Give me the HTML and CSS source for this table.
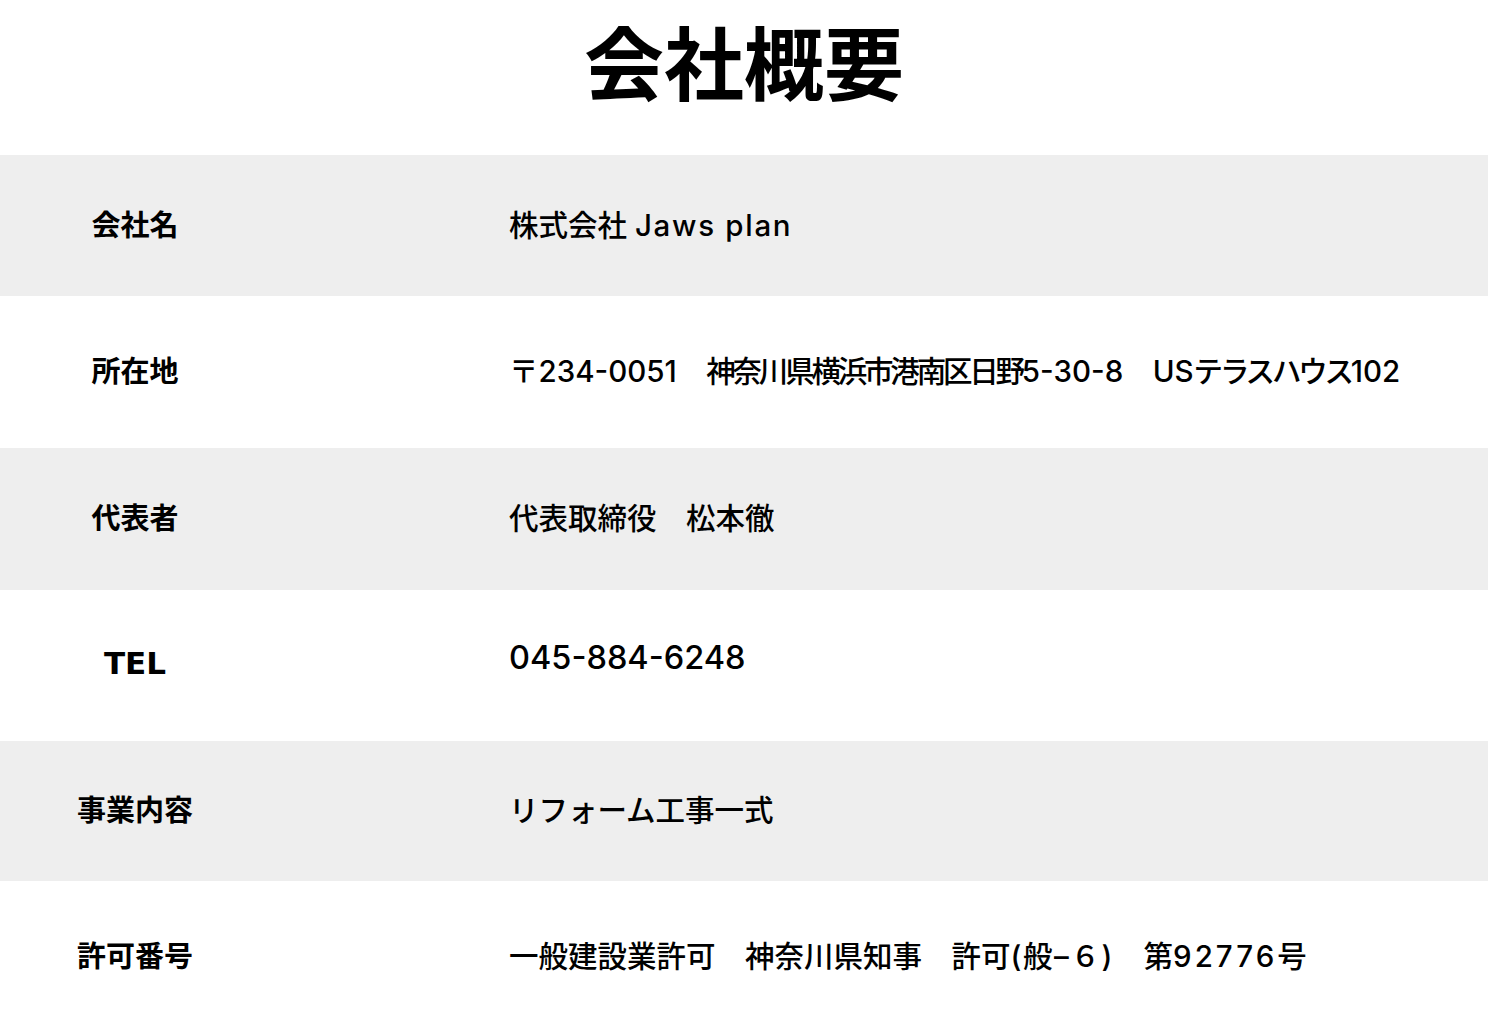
FILE: index.html
```html
<!DOCTYPE html>
<html lang="ja">
<head>
<meta charset="utf-8">
<link rel="stylesheet" href="styles.css">
</head>
<body>
<h1 class="title">会社概要</h1>
<div class="table">
  <div class="row gray h141"><div class="label">会社名</div><div class="value">株式会社 <span class="wide">Jaws plan</span></div></div>
  <div class="row h152"><div class="label">所在地</div><div class="value">〒234-0051　<span class="tight">神奈川県横浜市港南区日野</span>5-30-8　US<span class="tight">テラスハウス</span>102</div></div>
  <div class="row gray h142"><div class="label">代表者</div><div class="value">代表取締役　松本徹</div></div>
  <div class="row h151"><div class="label latin">TEL</div><div class="value tel">045-884-6248</div></div>
  <div class="row gray h140"><div class="label">事業内容</div><div class="value">リフォーム工事一式</div></div>
  <div class="row h152"><div class="label">許可番号</div><div class="value">一般建設業許可　神奈川県知事　許可<span class="paren">(般–６)</span>　第<span class="num">92776</span>号</div></div>
</div>
</body>
</html>
```
FILE: styles.css
```css
html, body {
  margin: 0;
  padding: 0;
  background: #ffffff;
  color: #000000;
  font-family: "Inter", "Noto Sans CJK JP", sans-serif;
}
.title {
  margin: 0;
  height: 155px;
  display: flex;
  align-items: center;
  justify-content: center;
  font-family: "Noto Sans CJK JP", sans-serif;
  font-size: 80px;
  font-weight: 700;
  line-height: 1;
  padding-bottom: 38px;
  box-sizing: border-box;
}
.table {
  display: flex;
  flex-direction: column;
}
.row {
  display: flex;
  align-items: center;
  box-sizing: border-box;
  padding-bottom: 6px;
}
.gray { background: #eeeeee; }
.h141 { height: 141px; }
.h152 { height: 152px; }
.h142 { height: 142px; }
.h151 { height: 151px; }
.h140 { height: 140px; }
.label {
  width: 270px;
  text-align: center;
  font-family: "DejaVu Sans", "Noto Sans CJK JP", sans-serif;
  font-size: 29px;
  font-weight: 700;
  flex: none;
}
.label.latin {
  font-size: 31px;
}
.value {
  margin-left: 239px;
  font-size: 29.5px;
  font-weight: 500;
  white-space: nowrap;
}
.wide {
  letter-spacing: 1.7px;
}
.tight {
  letter-spacing: -3.2px;
}
.paren {
  letter-spacing: 1.6px;
}
.num {
  letter-spacing: 3px;
}
.value.tel {
  font-size: 32.5px;
  margin-top: -10px;
}
```
